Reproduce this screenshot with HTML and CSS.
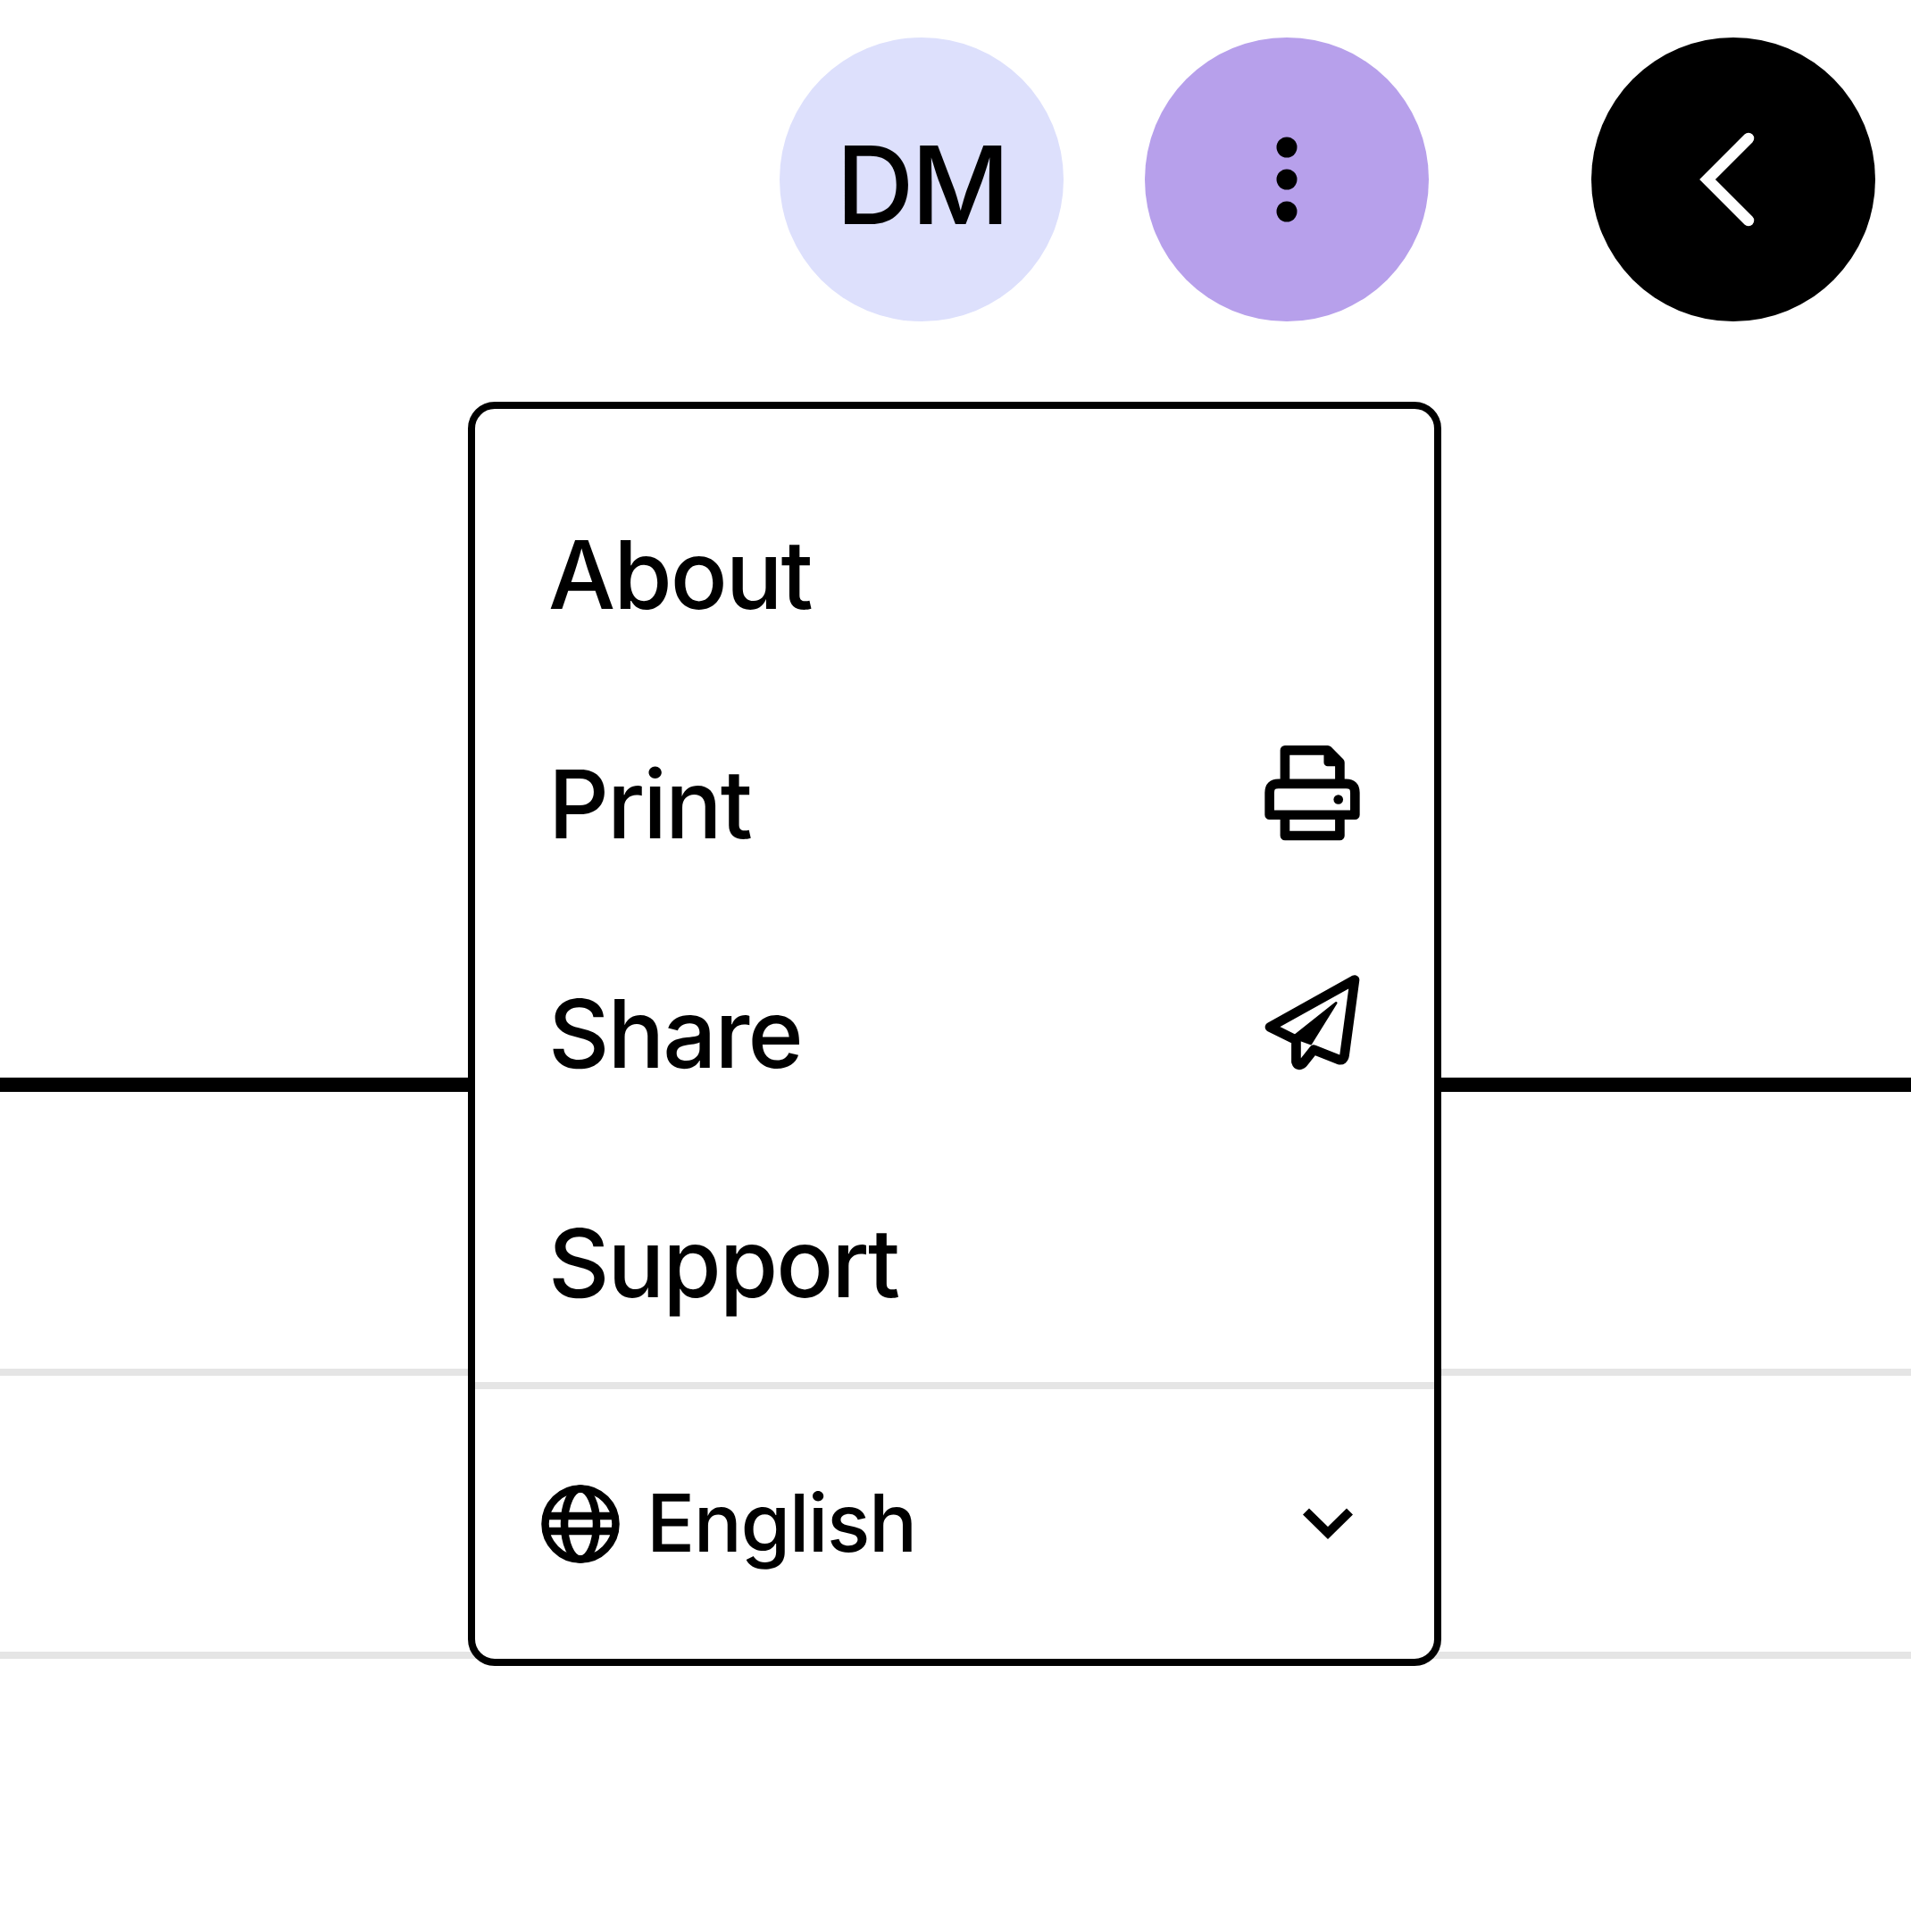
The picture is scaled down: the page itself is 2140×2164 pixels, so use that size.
FILE: index.html
```html
<!DOCTYPE html>
<html lang="en">
<head>
    <meta charset="UTF-8">
    <meta name="viewport" content="width=device-width, initial-scale=1.0">
    <title>Menu</title>
    <link rel="stylesheet" href="styles.css">
</head>
<body>
    <div class="page">
        <header class="top-bar">
            <div class="circle avatar">DM</div>
            <button class="circle more" aria-label="More">
                <svg width="24" height="96" viewBox="0 0 24 96"><circle cx="12" cy="12" r="11.5"/><circle cx="12" cy="48" r="11.5"/><circle cx="12" cy="84" r="11.5"/></svg>
            </button>
            <button class="circle back" aria-label="Back">
                <svg width="70" height="116" viewBox="0 0 70 116" fill="none" stroke="#fff" stroke-width="12.500" stroke-linecap="round"><path d="M58 12 L12 58 L58 104"/></svg>
            </button>
        </header>

        <div class="tab-line"></div>
        <div class="table-row"></div>
        <div class="table-row"></div>

        <div class="menu">
            <ul class="menu-list">
                <li class="menu-item"><span>About</span></li>
                <li class="menu-item">
                    <span>Print</span>
                    <svg class="menu-icon" viewBox="110 100 320 325" fill="none" stroke="#000" stroke-width="32" stroke-linejoin="round">
                        <path d="M178 225 V119 H322 L363 160 V225"/>
                        <path d="M322 120 V160 H363 Z" fill="#000" stroke-width="26"/>
                        <path d="M126 337 V262 Q126 232 156 232 H384 Q414 232 414 262 V337 Z"/>
                        <path d="M178 337 V407 H363 V337"/>
                        <circle cx="358" cy="285" r="16" fill="#000" stroke="none"/>
                    </svg>
                </li>
                <li class="menu-item">
                    <span>Share</span>
                    <svg class="menu-icon" viewBox="110 880 320 320" fill="none" stroke="#000" stroke-width="32" stroke-linejoin="round">
                        <path d="M412 898 L128 1056 L216 1100 V1172 Q222 1192 240 1176 L275 1132 L358 1165 Q375 1170 378 1150 Z"/>
                        <path d="M350 975 L205 1090 L265 1112 Z" fill="#000" stroke-width="8"/>
                    </svg>
                </li>
                <li class="menu-item"><span>Support</span></li>
            </ul>
            <div class="lang">
                <svg class="globe" width="88" height="88" viewBox="0 0 88 88" fill="none" stroke="#000" stroke-width="8.500">
                    <circle cx="44" cy="44" r="39.500"/>
                    <ellipse cx="44" cy="44" rx="18" ry="39.500"/>
                    <path d="M6 35 H82 M6 52 H82"/>
                </svg>
                <span class="lang-name">English</span>
                <svg class="chevron" width="58" height="36" viewBox="0 0 58 36" fill="none" stroke="#000" stroke-width="10"><path d="M4.500 4 L29 28 L53.500 4"/></svg>
            </div>
        </div>
    </div>
</body>
</html>
```

FILE: styles.css
```css
* { margin: 0; padding: 0; box-sizing: border-box; }
body {
    font-family: Inter, "Liberation Sans", Arial, sans-serif;
    background: white;
    color: black;
}
.page {
    position: relative;
    min-height: 2164px;
}
.top-bar {
    display: flex;
    justify-content: flex-end;
    padding: 42px 40px 0 0;
}
.circle {
    width: 318px;
    height: 318px;
    border: none;
    border-radius: 50%;
    display: flex;
    align-items: center;
    justify-content: center;
}
.avatar {
    background: #dde0fc;
    font-size: 121px;
    font-weight: 500;
    letter-spacing: -3px;
    padding-top: 11px;
}
.more {
    background: #b7a0eb;
    margin-left: 91px;
}
.back {
    background: black;
    margin-left: 182px;
}
.back svg {
    margin-right: 12px;
}
.tab-line {
    height: 863px;
    border-bottom: 16px solid black;
}
.table-row {
    height: 317.500px;
    border-bottom: 8px solid #e5e5e5;
}
.menu {
    position: absolute;
    top: 450px;
    left: 524px;
    width: 1090px;
    height: 1416px;
    background: white;
    border: 8px solid black;
    border-radius: 30px;
    display: flex;
    flex-direction: column;
}
.menu-list {
    list-style: none;
    padding-top: 44px;
    height: 1090px;
}
.menu-item {
    height: 257px;
    padding: 0 83px 0 82px;
    display: flex;
    align-items: center;
    justify-content: space-between;
    font-size: 106px;
    font-weight: 500;
    letter-spacing: -2px;
}
.menu-item span {
    padding-top: 26px;
}
.menu-icon {
    width: 107px;
    height: 108px;
}
.lang {
    flex: 1;
    border-top: 8px solid #e5e5e5;
    padding: 0 90px 0 74px;
    display: flex;
    align-items: center;
    font-size: 90px;
    font-weight: 500;
    letter-spacing: -1.500px;
}
.lang-name {
    margin-left: 30px;
    padding-bottom: 3px;
}
.chevron {
    margin-left: auto;
}
```
